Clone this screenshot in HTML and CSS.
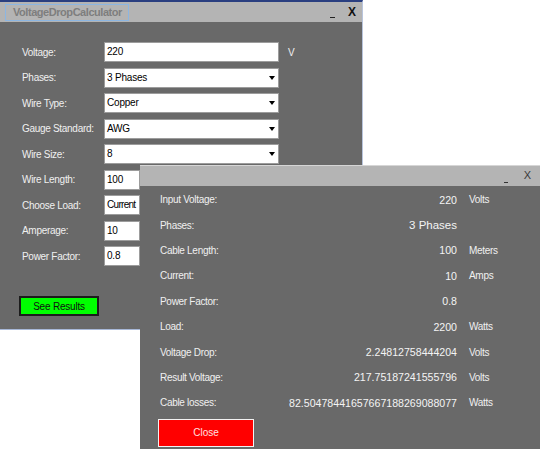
FILE: index.html
```html
<!DOCTYPE html>
<html lang="en">
<head>
<meta charset="UTF-8">
<title>VoltageDropCalculator</title>
<link rel="stylesheet" href="styles.css">
</head>
<body>

<div class="desktop">

  <!-- MAIN WINDOW -->
  <div class="window main-win">
    <div class="titlebar">
      <div class="app-title">VoltageDropCalculator</div>
      <div class="win-buttons">
        <span class="btn-min" title="Minimize"></span>
        <span class="btn-close">X</span>
      </div>
    </div>

    <div class="win-body">
      <div class="form">
        <div class="label">Voltage:</div>
        <div class="field">220</div>
        <div class="unit">V</div>

        <div class="label">Phases:</div>
        <div class="field combo">3 Phases</div>
        <div></div>

        <div class="label">Wire Type:</div>
        <div class="field combo">Copper</div>
        <div></div>

        <div class="label">Gauge Standard:</div>
        <div class="field combo">AWG</div>
        <div></div>

        <div class="label">Wire Size:</div>
        <div class="field combo">8</div>
        <div></div>

        <div class="label">Wire Length:</div>
        <div class="field small">100</div>
        <div></div>

        <div class="label">Choose Load:</div>
        <div class="field small tight">Current</div>
        <div></div>

        <div class="label">Amperage:</div>
        <div class="field small">10</div>
        <div></div>

        <div class="label">Power Factor:</div>
        <div class="field small">0.8</div>
        <div></div>
      </div>

      <button class="see-results">See Results</button>
    </div>
  </div>

  <!-- RESULTS WINDOW -->
  <div class="window results-win">
    <div class="titlebar small-bar">
      <div class="win-buttons">
        <span class="btn-min" title="Minimize"></span>
        <span class="btn-close">X</span>
      </div>
    </div>

    <div class="win-body results-body">
      <div class="results">
        <div class="label">Input Voltage:</div>
        <div class="value">220</div>
        <div class="unit">Volts</div>

        <div class="label">Phases:</div>
        <div class="value big">3 Phases</div>
        <div class="unit"></div>

        <div class="label">Cable Length:</div>
        <div class="value">100</div>
        <div class="unit">Meters</div>

        <div class="label">Current:</div>
        <div class="value">10</div>
        <div class="unit">Amps</div>

        <div class="label">Power Factor:</div>
        <div class="value">0.8</div>
        <div class="unit"></div>

        <div class="label">Load:</div>
        <div class="value">2200</div>
        <div class="unit">Watts</div>

        <div class="label">Voltage Drop:</div>
        <div class="value">2.24812758444204</div>
        <div class="unit">Volts</div>

        <div class="label">Result Voltage:</div>
        <div class="value">217.75187241555796</div>
        <div class="unit">Volts</div>

        <div class="label">Cable losses:</div>
        <div class="value">82.50478441657667188269088077</div>
        <div class="unit">Watts</div>
      </div>

      <button class="close-btn">Close</button>
    </div>
  </div>

</div>

</body>
</html>
```

FILE: styles.css
```css
body {
  margin: 0;
  background: #ffffff;
  font-family: "Liberation Sans", Arial, sans-serif;
  font-size: 10px;
  overflow: hidden;
}

.desktop {
  position: relative;
  width: 540px;
  height: 449px;
}

/* WINDOWS */
.window {
  display: flex;
  flex-direction: column;
  background: #696969;
}

.main-win {
  width: 362px;
  height: 327px;
  border-top: 2px solid #2a3f80;
  border-right: 1px solid #b8c4dc;
  border-bottom: 1px solid #a8b8d8;
}

.results-win {
  position: absolute;
  left: 140px;
  top: 165px;
  width: 400px;
  height: 284px;
  border-top: 1px solid #d6d6d6;
}

/* TITLE BAR */
.titlebar {
  height: 20px;
  background: #b4b4b4;
  display: flex;
  align-items: center;
  justify-content: space-between;
  padding: 0 6px 0 5px;
  flex-shrink: 0;
}

.app-title {
  height: 15px;
  padding: 0 6px 0 7px;
  border: 1px solid #8cb6e2;
  color: #7e7e7e;
  font-weight: bold;
  font-size: 11px;
  letter-spacing: -0.45px;
  line-height: 15px;
}

.win-buttons {
  display: flex;
  align-items: center;
  gap: 13px;
  height: 20px;
  color: #111;
}

.btn-min {
  width: 5px;
  height: 1px;
  background: #222;
  margin-top: 10px;
}

.btn-close {
  font-size: 12px;
  font-weight: bold;
}

.small-bar {
  justify-content: flex-end;
  padding-right: 9px;
}

.small-bar .win-buttons {
  gap: 16px;
  color: #3a3a3a;
}

.small-bar .btn-min {
  width: 4px;
  background: #333;
  margin-top: 12px;
}

.small-bar .btn-close {
  font-weight: normal;
  font-size: 11px;
  padding-bottom: 3px;
}

/* MAIN FORM */
.win-body {
  flex: 1;
  padding: 20px 0 0 19px;
}

.form {
  display: grid;
  grid-template-columns: 82px 175px auto;
  grid-auto-rows: 20px;
  row-gap: 5.5px;
  align-items: center;
  margin-left: 3px;
}

.label {
  color: #f0f0f0;
  letter-spacing: -0.3px;
}

.unit {
  color: #f0f0f0;
  padding-left: 9px;
  letter-spacing: -0.3px;
}

.field {
  position: relative;
  height: 18px;
  line-height: 17px;
  background: #ffffff;
  border: 1px solid #9c9c9c;
  padding-left: 2px;
  color: #000;
  letter-spacing: -0.2px;
  white-space: nowrap;
  overflow: hidden;
}

.field.small {
  width: 32px;
}

.field.tight {
  letter-spacing: -0.7px;
}

.combo::after {
  content: "";
  position: absolute;
  right: 3px;
  top: 7px;
  border-top: 4px solid #000;
  border-left: 3.5px solid transparent;
  border-right: 3.5px solid transparent;
}

.see-results {
  display: block;
  margin-top: 30px;
  width: 80px;
  height: 20px;
  background: #00ff00;
  border: 2px solid #1c1c1c;
  color: #111;
  font-family: inherit;
  font-size: 10px;
  letter-spacing: -0.2px;
  padding: 0;
}

/* RESULTS */
.results-body {
  padding: 1px 0 0 20px;
}

.results {
  display: grid;
  grid-template-columns: 100px 197px auto;
  grid-auto-rows: 25.4px;
  align-items: center;
}

.value {
  color: #f4f4f4;
  text-align: right;
  font-size: 10.6px;
  white-space: nowrap;
}

.value.big {
  font-size: 11.5px;
}

.results .unit {
  padding-left: 12px;
}

.close-btn {
  display: block;
  margin: 3px 0 0 -2px;
  width: 96px;
  height: 28px;
  background: #ff0000;
  border: 1px solid #f2f2f2;
  color: #ffe0e0;
  font-family: inherit;
  font-size: 10px;
  padding: 0;
}
```
